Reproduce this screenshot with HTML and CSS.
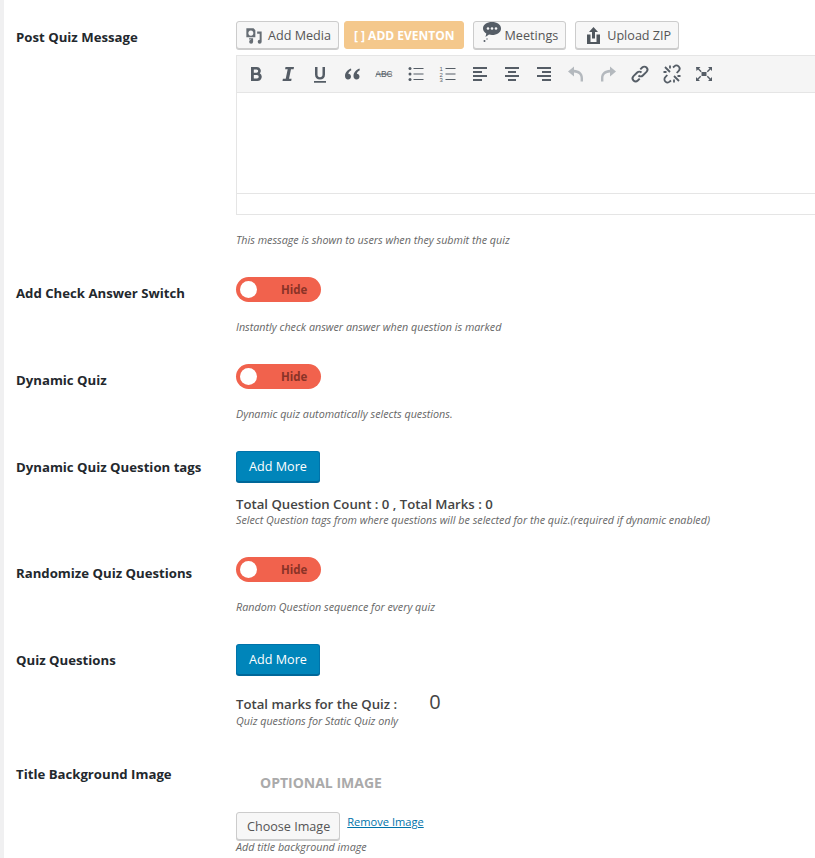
FILE: index.html
```html
<!doctype html>
<html>
  <head>
    <title>Quiz Settings</title>
    <link rel="stylesheet" href="styles.css">
  </head>

  <body>
    <main class="settings">
      <!-- Post Quiz Message -->
      <section class="row row-editor">
        <h3 class="label">Post Quiz Message</h3>
        <div class="field">
          <div class="media-buttons">
            <button class="btn btn-media">
              <svg class="ico" width="18" height="18" viewBox="0 0 20 20" fill="#666d74">
                <path d="M1.500 1.500h8l2 2v8h-10z M6.500 4a2.800 2.800 0 1 0 .01 0z" fill-rule="evenodd"/>
                <path d="M13.500 5h5v11.500a2.200 2.200 0 1 1-2.200-2.200V7.500h-2.800z"/>
                <path d="M4.500 12.500h4.500v4a2.200 2.200 0 1 1-2.200-2.200v-.3H4.500z"/>
              </svg>
              Add Media
            </button>
            <button class="btn btn-eventon">[ ] ADD EVENTON</button>
            <button class="btn btn-meetings">
              <svg class="ico ico-talk" width="20" height="24" viewBox="0 0 20 24" fill="#555d66">
                <path d="M10 1c5 0 9 2.600 9 6.500S15 14 10 14c-1 0-2-.1-3-.4L3.500 16l.8-3.600C2.300 11.200 1 9.500 1 7.500 1 3.600 5 1 10 1z"/>
                <circle cx="6" cy="7.500" r="1.300" fill="#f7f7f7"/>
                <circle cx="10" cy="7.500" r="1.300" fill="#f7f7f7"/>
                <circle cx="14" cy="7.500" r="1.300" fill="#f7f7f7"/>
                <circle cx="2.500" cy="20" r="1"/>
                <circle cx="5" cy="18" r=".7"/>
              </svg>
              Meetings
            </button>
            <button class="btn btn-upload">
              <svg class="ico" width="13" height="18" viewBox="0 0 13 18" fill="#50575e">
                <path d="M6.500 0l4.500 5H8v6.500H5V5H2z"/>
                <path d="M0 7.500h3.500v7.500h6V7.500H13V17H0z"/>
              </svg>
              Upload ZIP
            </button>
          </div>

          <div class="editor">
            <div class="toolbar">
              <svg class="tool" viewBox="0 0 20 20" fill="#555d66"><path d="M5 3h6a3.800 3.800 0 0 1 2.800 6.300A4.200 4.200 0 0 1 11.500 17H5zm2.800 2.400v3.400h2.700a1.700 1.700 0 0 0 0-3.400zm0 5.700v3.500h3.200a1.750 1.750 0 0 0 0-3.500z" fill-rule="evenodd"/></svg>
              <svg class="tool" viewBox="0 0 20 20" fill="#555d66"><path d="M7.500 3H16l-.4 2.200H13l-2 9.600h2.600L13.200 17H4.500l.4-2.200h2.800l2-9.600H7.100z"/></svg>
              <svg class="tool" viewBox="0 0 20 20" fill="#555d66"><path d="M5 3h2.500v7.500c0 1.800 1 2.800 2.500 2.800s2.500-1 2.500-2.800V3H15v7.500c0 3.200-2 5-5 5s-5-1.800-5-5zM4 17h12v1.800H4z"/></svg>
              <svg class="tool" viewBox="0 0 20 20" fill="#555d66"><path d="M9 4.500C5.500 6 3 8.500 3 12c0 2.200 1.300 3.500 3 3.500s3-1.300 3-3-1.200-2.800-2.700-2.800c.3-1.300 1.300-2.500 3-3.400zM17.500 4.500C14 6 11.500 8.500 11.500 12c0 2.200 1.300 3.500 3 3.500s3-1.300 3-3-1.200-2.800-2.700-2.800c.3-1.300 1.300-2.500 3-3.400z"/></svg>
              <svg class="tool" viewBox="0 0 20 20"><text x="10" y="13.400" class="abc">ABC</text><path d="M2 9.600h16v1H2z" fill="#555d66"/></svg>
              <svg class="tool" viewBox="0 0 20 20" fill="#555d66"><circle cx="4" cy="4.500" r="1.500"/><circle cx="4" cy="10" r="1.500"/><circle cx="4" cy="15.500" r="1.500"/><path d="M7.500 4h10v1h-10zM7.500 9.500h10v1h-10zM7.500 15h10v1h-10z"/></svg>
              <svg class="tool" viewBox="0 0 20 20" fill="#555d66"><text x="1.500" y="7" class="num">1</text><text x="1.500" y="12.700" class="num">2</text><text x="1.500" y="18.400" class="num">3</text><path d="M7.500 4h10v1h-10zM7.500 9.500h10v1h-10zM7.500 15h10v1h-10z"/></svg>
              <svg class="tool" viewBox="0 0 20 20" fill="#555d66"><path d="M3 3h14v2H3zM3 7h9v2H3zM3 11h14v2H3zM3 15h9v2H3z"/></svg>
              <svg class="tool" viewBox="0 0 20 20" fill="#555d66"><path d="M3 3h14v2H3zM6 7h8v2H6zM3 11h14v2H3zM6 15h8v2H6z"/></svg>
              <svg class="tool" viewBox="0 0 20 20" fill="#555d66"><path d="M3 3h14v2H3zM8 7h9v2H8zM3 11h14v2H3zM8 15h9v2H8z"/></svg>
              <svg class="tool" viewBox="0 0 20 20" fill="#b4b9be"><path d="M2 7.500L8 2.500v3.200c5 .2 9 3 9 8.300v3.500h-2.400V14c0-3.400-2.700-5.200-6.600-5.400v3.900z"/></svg>
              <svg class="tool" viewBox="0 0 20 20" fill="#b4b9be"><path d="M18 7.500L12 2.500v3.200c-5 .2-9 3-9 8.300v3.500h2.400V14c0-3.400 2.700-5.200 6.600-5.400v3.900z"/></svg>
              <svg class="tool" viewBox="0 0 20 20" fill="none" stroke="#555d66" stroke-width="1.900"><path d="M8.500 11.500a3 3 0 0 0 4.300 0l3.700-3.700a3 3 0 0 0-4.300-4.300l-1.900 1.900"/><path d="M11.500 8.500a3 3 0 0 0-4.300 0l-3.700 3.700a3 3 0 0 0 4.300 4.300l1.900-1.900"/></svg>
              <svg class="tool" viewBox="0 0 20 20" fill="none" stroke="#555d66" stroke-width="1.800"><path d="M11 3.500l1.200-1a3 3 0 0 1 4.500 4.300l-2 2.200"/><path d="M9 16.500l-1.200 1a3 3 0 0 1-4.500-4.300l2-2.200"/><path d="M3 3l5 5M12 12l5 5M8 1.500v3M1.500 8h3M12 18.500v-3M18.500 12h-3"/></svg>
              <svg class="tool" viewBox="0 0 20 20" fill="#555d66"><path d="M2 3h4.500L5 4.500l2.700 2.700-1 1L4 5.500 2.500 7zM18 3v4l-1.500-1.500-2.700 2.700-1-1L15.500 4.500 14 3zM2 17v-4l1.500 1.500 2.700-2.700 1 1L4.500 15.500 6 17zM18 17h-4l1.500-1.500-2.700-2.700 1-1 2.700 2.700L18 13z"/><path d="M7.500 8h5v4h-5z"/></svg>
            </div>
            <div class="edit-area"></div>
            <div class="status-bar"></div>
          </div>

          <p class="note note-editor">This message is shown to users when they submit the quiz</p>
        </div>
      </section>

      <!-- Add Check Answer Switch -->
      <section class="row row-toggle">
        <h3 class="label">Add Check Answer Switch</h3>
        <div class="field">
          <div class="toggle"><span class="knob"></span><span class="toggle-text">Hide</span></div>
          <p class="note note-toggle">Instantly check answer answer when question is marked</p>
        </div>
      </section>

      <!-- Dynamic Quiz -->
      <section class="row row-toggle">
        <h3 class="label">Dynamic Quiz</h3>
        <div class="field">
          <div class="toggle"><span class="knob"></span><span class="toggle-text">Hide</span></div>
          <p class="note note-toggle">Dynamic quiz automatically selects questions.</p>
        </div>
      </section>

      <!-- Dynamic Quiz Question tags -->
      <section class="row row-tags">
        <h3 class="label">Dynamic Quiz Question tags</h3>
        <div class="field">
          <button class="btn-primary">Add More</button>
          <div class="total total-tags">Total Question Count : 0 , Total Marks : 0</div>
          <p class="note">Select Question tags from where questions will be selected for the quiz.(required if dynamic enabled)</p>
        </div>
      </section>

      <!-- Randomize Quiz Questions -->
      <section class="row row-toggle">
        <h3 class="label">Randomize Quiz Questions</h3>
        <div class="field">
          <div class="toggle"><span class="knob"></span><span class="toggle-text">Hide</span></div>
          <p class="note note-toggle">Random Question sequence for every quiz</p>
        </div>
      </section>

      <!-- Quiz Questions -->
      <section class="row row-questions">
        <h3 class="label">Quiz Questions</h3>
        <div class="field">
          <button class="btn-primary">Add More</button>
          <div class="total total-marks">
            <span>Total marks for the Quiz :</span>
            <span class="marks-value">0</span>
          </div>
          <p class="note">Quiz questions for Static Quiz only</p>
        </div>
      </section>

      <!-- Title Background Image -->
      <section class="row">
        <h3 class="label">Title Background Image</h3>
        <div class="field">
          <div class="optional">OPTIONAL IMAGE</div>
          <div class="image-actions">
            <button class="btn btn-choose">Choose Image</button>
            <a class="remove-link" href="#">Remove Image</a>
          </div>
          <p class="note">Add title background image</p>
        </div>
      </section>
    </main>
  </body>
</html>
```

FILE: styles.css
```css
html, body {
  height: 858px;
  overflow: hidden;
}

body {
  margin: 0;
  background: #fff;
  border-left: 4px solid #f0f0f1;
  font-family: "Open Sans", sans-serif;
  font-size: 13px;
  color: #23282d;
}

.settings {
  padding: 21px 0 0 12px;
}

.row {
  display: flex;
}

.row-editor {
  margin-bottom: 29px;
}

.row-toggle {
  height: 87px;
}

.row-tags {
  height: 106px;
}

.row-questions {
  height: 114px;
}

.label {
  flex: 0 0 220px;
  margin: 6px 0 0;
  font-size: 13.2px;
  line-height: 20px;
  font-weight: 700;
  color: #23282d;
}

.field {
  flex: 1;
  min-width: 0;
}

.note {
  margin: 0;
  font-size: 10.75px;
  line-height: 15px;
  font-style: italic;
  color: #666;
}

.note-editor {
  margin-top: 18px;
}

.note-toggle {
  margin-top: 18px;
}

/* media buttons */
.media-buttons {
  display: flex;
  gap: 5px;
  height: 28px;
  margin-bottom: 6px;
}

.btn {
  display: inline-flex;
  align-items: center;
  height: 28px;
  padding: 1px 7px 0 8px;
  font-family: inherit;
  font-size: 12.6px;
  color: #555;
  background: #f7f7f7;
  border: 1px solid #ccc;
  border-radius: 3px;
  box-shadow: 0 1px 0 #ccc;
}

.btn .ico {
  margin-right: 5px;
}

.btn-eventon {
  padding: 0 8px 0 9px;
  font-size: 12px;
  font-weight: 700;
  color: #fff;
  background: #f4c88c;
  border-color: #f4c88c;
  box-shadow: none;
}

.btn-meetings {
  margin-left: 4px;
}

.btn-meetings .ico {
  margin-right: 3px;
}

.btn-upload {
  margin-left: 4px;
  padding-left: 11px;
}

.btn-upload .ico {
  margin-right: 7px;
}

.ico-talk {
  margin-top: -6px;
}

/* editor */
.editor {
  border: 1px solid #e5e5e5;
  border-right: 0;
}

.toolbar {
  display: flex;
  align-items: center;
  gap: 12px;
  height: 36px;
  padding: 0 0 0 9px;
  background: #f5f5f5;
  border-bottom: 1px solid #e5e5e5;
}

.tool {
  flex: none;
  width: 20px;
  height: 20px;
}

.abc {
  font-family: "Liberation Sans", sans-serif;
  font-size: 8.5px;
  text-anchor: middle;
  fill: #555d66;
}

.num {
  font-family: "Liberation Sans", sans-serif;
  font-size: 6px;
  fill: #555d66;
}

.edit-area {
  height: 100px;
  background: #fff;
  border-bottom: 1px solid #e5e5e5;
}

.status-bar {
  height: 20px;
  background: #fff;
}

/* toggle */
.toggle {
  position: relative;
  width: 85px;
  height: 25px;
  border-radius: 13px;
  background: #f1624d;
}

.knob {
  position: absolute;
  top: 4px;
  left: 4px;
  width: 17px;
  height: 17px;
  border-radius: 50%;
  background: #fff;
}

.toggle-text {
  position: absolute;
  top: 4px;
  left: 45px;
  font-size: 11.5px;
  line-height: 18px;
  font-weight: 700;
  color: #8a3327;
}

/* add more */
.btn-primary {
  display: block;
  width: 84px;
  height: 31px;
  padding: 0 0 1px;
  font-family: inherit;
  font-size: 12.6px;
  color: #fff;
  background: #0085ba;
  border: 1px solid #0073aa;
  border-bottom-color: #006799;
  border-radius: 3px;
  box-shadow: 0 1px 0 #006799;
}

.total {
  font-size: 13.2px;
  font-weight: 600;
  color: #444;
}

.total-tags {
  margin: 15px 0 1px;
  line-height: 15px;
}

.total-marks {
  display: flex;
  align-items: flex-end;
  margin: 16px 0 1px;
  height: 22px;
}

.marks-value {
  margin-left: 32px;
  font-size: 20px;
  line-height: 23px;
  font-weight: 400;
}

/* image */
.optional {
  margin: 0 0 0 24px;
  padding-top: 15px;
  font-size: 14px;
  line-height: 20px;
  font-weight: 700;
  color: #aaa;
}

.image-actions {
  display: flex;
  align-items: flex-start;
  gap: 7px;
  margin-top: 19px;
}

.btn-choose {
  padding: 1px 9px 0 10px;
}

.remove-link {
  margin-top: 1px;
  font-size: 11.1px;
  line-height: 18px;
  color: #0073aa;
}
```
